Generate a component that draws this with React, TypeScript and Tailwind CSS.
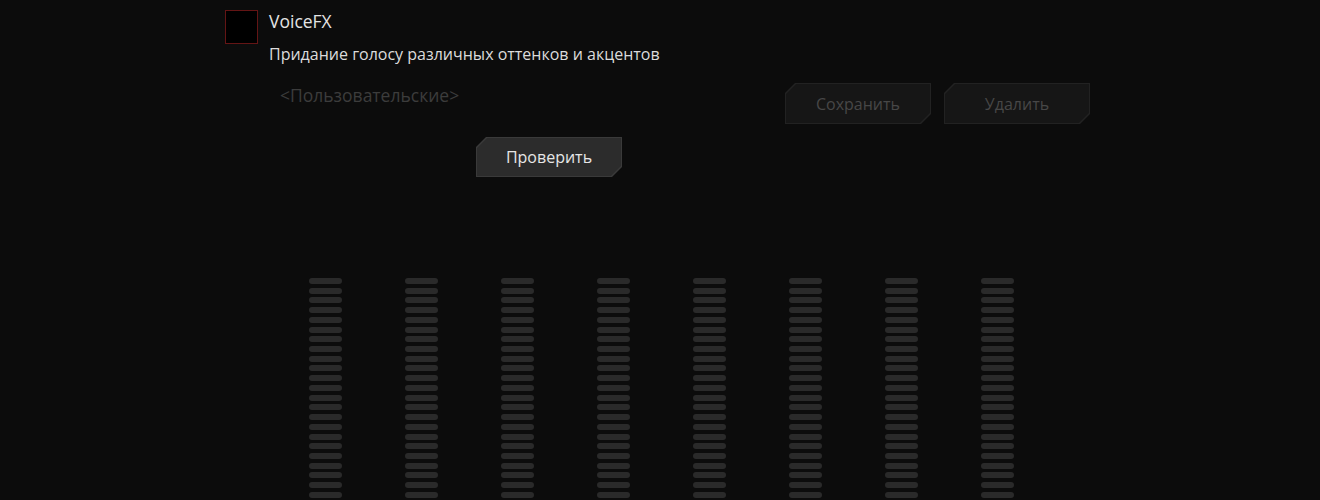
import React from "react";

const cut =
  "[clip-path:polygon(10px_0,100%_0,100%_calc(100%-10px),calc(100%-10px)_100%,0_100%,0_10px)]";

function CutButton({ label, active }: { label: string; active?: boolean }) {
  return (
    <div
      className={`${cut} w-[146px] h-full p-px ${active ? "bg-[#3a3a3a]" : "bg-[#222222]"}`}
    >
      <div
        className={`${cut} w-full h-full flex items-center justify-center text-[16px] ${
          active ? "bg-[#2c2c2c] text-[#e6e6e6]" : "bg-[#161616] text-[#474747]"
        }`}
      >
        {label}
      </div>
    </div>
  );
}

function EqColumn() {
  return (
    <div className="flex flex-col gap-[3.73px] w-[33px]">
      {Array.from({ length: 24 }).map((_, i) => (
        <div key={i} className="h-[6px] rounded-[3px] bg-[#2a2a2a] blur-[0.4px]" />
      ))}
    </div>
  );
}

export default function App() {
  return (
    <div
      className="w-[1320px] h-[500px] overflow-hidden bg-[#0c0c0c]"
      style={{ fontFamily: '"Open Sans", "Noto Sans", sans-serif' }}
    >
      <div className="flex gap-[11px] pl-[225px] pt-[10px]">
        <div className="w-[33px] h-[34px] border border-[#641515] bg-black shrink-0" />
        <div className="flex flex-col">
          <span className="text-[17.5px] leading-[24px] text-[#e4e4e4] -mt-[1px]">VoiceFX</span>
          <span className="text-[16px] leading-[22px] text-[#dcdcdc] mt-[10px]">
            Придание голосу различных оттенков и акцентов
          </span>
        </div>
      </div>

      <div className="flex items-start pl-[280px] mt-[20px]">
        <span className="text-[17.5px] leading-[24px] text-[#3c3c3c] w-[505px] -mt-[2px]">
          &lt;Пользовательские&gt;
        </span>
        <div className="flex gap-[13px] h-[41px] mt-[-2px]">
          <CutButton label="Сохранить" />
          <CutButton label="Удалить" />
        </div>
      </div>

      <div className="pl-[476px] mt-[13px]">
        <div className="w-[146px] h-[40px]">
          <CutButton label="Проверить" active />
        </div>
      </div>

      <div className="flex gap-[63px] pl-[309px] mt-[101px]">
        {Array.from({ length: 8 }).map((_, i) => (
          <EqColumn key={i} />
        ))}
      </div>
    </div>
  );
}
